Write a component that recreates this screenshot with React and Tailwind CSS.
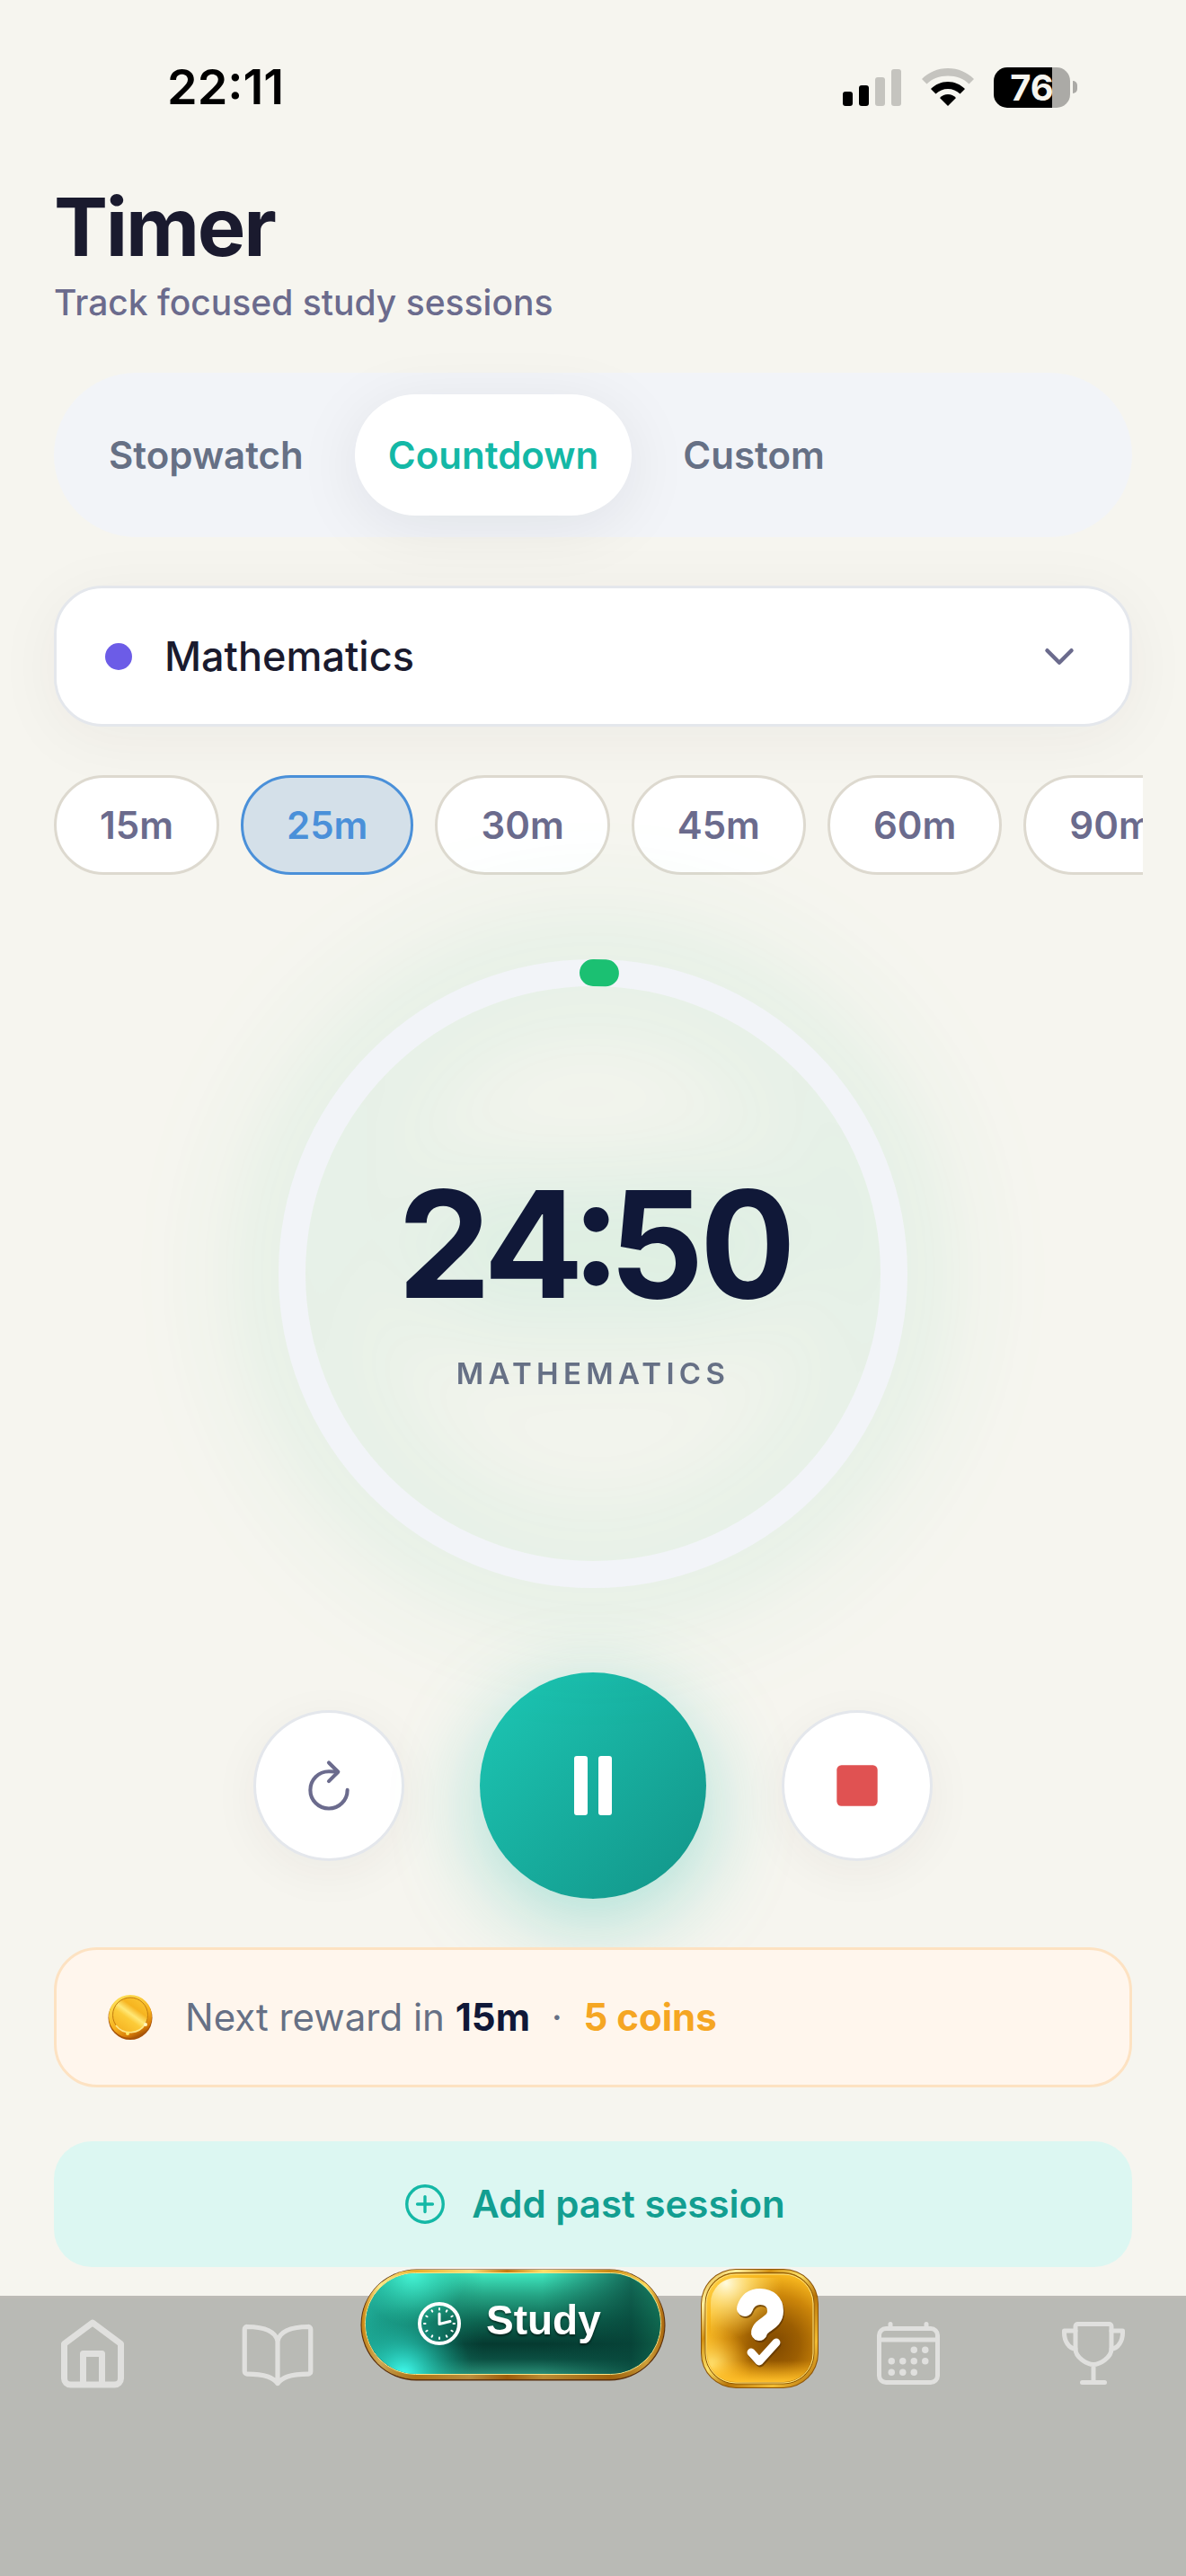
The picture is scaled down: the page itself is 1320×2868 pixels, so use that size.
import { useState } from 'react';
import { IoAddCircleOutline, IoBookOutline, IoCalendarOutline, IoChevronDown, IoPause, IoRefreshOutline, IoStop, IoTrophyOutline } from 'react-icons/io5';

const MODES = ['Stopwatch', 'Countdown', 'Custom'];
const PRESETS = [15, 25, 30, 45, 60, 90];
const RADIUS = 335;
const CIRCUMFERENCE = 2 * Math.PI * RADIUS;

function StatusBar() {
  return (
    <div className="flex items-center justify-between pt-[65px] pr-[121px] pl-[186px]">
      <span className="text-[54px] leading-[64px] font-semibold text-black">22:11</span>
      <div className="flex items-center">
        <svg width="66" height="42" viewBox="0 0 66 42" aria-hidden="true">
          <rect x="0" y="26" width="11" height="16" rx="3" fill="#000" />
          <rect x="18" y="19" width="11" height="23" rx="3" fill="#000" />
          <rect x="36" y="10" width="11" height="32" rx="3" fill="#c5c4bf" />
          <rect x="54" y="1" width="11" height="41" rx="3" fill="#c5c4bf" />
        </svg>
        <svg className="ml-[22px]" width="58" height="42" viewBox="0 0 58 42" aria-hidden="true">
          <path d="M29 0C17.500 0 7.500 4.500 0 12l5.500 5.500C11.500 11.500 19.500 8.500 29 8.500s17.500 3 23.500 9L58 12C50.500 4.500 40.500 0 29 0Z" fill="#c5c4bf" />
          <path d="M29 15c-7.500 0-14 3-19 8l5.500 5.500c3.500-3.500 8.500-5.500 13.500-5.500s10 2 13.500 5.500L48 23c-5-5-11.500-8-19-8Z" fill="#000" />
          <path d="M29 29c-3.500 0-6.500 1.500-9 4l9 9 9-9c-2.500-2.500-5.500-4-9-4Z" fill="#000" />
        </svg>
        <div className="ml-[22px] flex h-[45px] w-[85px] items-center justify-center rounded-[15px] bg-[linear-gradient(90deg,#000_77%,#abaaa6_77%)] text-[40px] leading-[45px] font-bold text-[#f6f5ef]">
          76
        </div>
        <span className="ml-[3px] h-[14px] w-[5px] rounded-r-full bg-[#abaaa6]" />
      </div>
    </div>
  );
}

function HomeIcon() {
  return (
    <svg width="72" height="80" viewBox="0 0 72 80" fill="none" stroke="currentColor" strokeWidth="7" strokeLinejoin="round" aria-hidden="true">
      <path d="M4.500 29.500 36 6l31.500 23.500V68a7 7 0 0 1-7 7h-49a7 7 0 0 1-7-7Z" />
      <path d="M25.500 75V40.500h21V75" />
    </svg>
  );
}

function StudyArt() {
  return (
    <svg className="absolute inset-0 h-full w-full" viewBox="0 0 340 125" aria-hidden="true">
      <defs>
        <linearGradient id="rim" x1="0" y1="0" x2="1" y2="0">
          <stop offset="0" stopColor="#c98410" />
          <stop offset="0.060" stopColor="#ffe98a" />
          <stop offset="0.180" stopColor="#e9ae2a" />
          <stop offset="0.360" stopColor="#ffe27a" />
          <stop offset="0.480" stopColor="#c47a10" />
          <stop offset="0.600" stopColor="#ffe06a" />
          <stop offset="0.820" stopColor="#c98814" />
          <stop offset="0.940" stopColor="#ffd95a" />
          <stop offset="1" stopColor="#a8650c" />
        </linearGradient>
        <linearGradient id="rimShade" x1="0" y1="0" x2="0" y2="1">
          <stop offset="0.500" stopColor="#8a4b05" stopOpacity="0" />
          <stop offset="1" stopColor="#7a3f05" stopOpacity="0.550" />
        </linearGradient>
        <linearGradient id="teal" x1="0" y1="0" x2="0" y2="1">
          <stop offset="0" stopColor="#3fe8c0" />
          <stop offset="0.220" stopColor="#25a585" />
          <stop offset="0.480" stopColor="#0d6450" />
          <stop offset="0.700" stopColor="#053a30" />
          <stop offset="0.850" stopColor="#0b4f42" />
          <stop offset="1" stopColor="#2a8f77" />
        </linearGradient>
        <linearGradient id="tealShade" x1="0" y1="0" x2="1" y2="0">
          <stop offset="0.600" stopColor="#07463a" stopOpacity="0" />
          <stop offset="0.900" stopColor="#07463a" stopOpacity="0.750" />
          <stop offset="1" stopColor="#116a50" stopOpacity="0.750" />
        </linearGradient>
        <linearGradient id="tealLeft" x1="0" y1="0" x2="1" y2="0">
          <stop offset="0" stopColor="#20b09c" stopOpacity="0.900" />
          <stop offset="0.400" stopColor="#12806c" stopOpacity="0" />
        </linearGradient>
        <radialGradient id="cyanGlow" gradientUnits="userSpaceOnUse" cx="48" cy="118" r="76">
          <stop offset="0" stopColor="#42fff2" />
          <stop offset="0.350" stopColor="#2bd6c4" stopOpacity="0.700" />
          <stop offset="1" stopColor="#119c84" stopOpacity="0" />
        </radialGradient>
        <radialGradient id="mintGlow" gradientUnits="userSpaceOnUse" cx="58" cy="4" r="60">
          <stop offset="0" stopColor="#4bffe0" stopOpacity="0.850" />
          <stop offset="1" stopColor="#2fe0bd" stopOpacity="0" />
        </radialGradient>
      </defs>
      <rect x="0.500" y="0.500" width="339" height="124" rx="62" fill="#5b2f0b" />
      <rect x="1.500" y="1" width="337" height="122" rx="61" fill="url(#rim)" />
      <rect x="1.500" y="1" width="337" height="122" rx="61" fill="url(#rimShade)" />
      <rect x="5.500" y="4.500" width="329" height="113" rx="56" fill="url(#teal)" stroke="#ffe585" strokeWidth="1" />
      <rect x="6" y="5" width="328" height="112" rx="56" fill="url(#tealShade)" />
      <rect x="6" y="5" width="328" height="112" rx="56" fill="url(#tealLeft)" />
      <rect x="6" y="5" width="328" height="112" rx="56" fill="url(#mintGlow)" />
      <rect x="6" y="5" width="328" height="112" rx="56" fill="url(#cyanGlow)" />
    </svg>
  );
}

function ClockIcon() {
  return (
    <svg className="relative" width="50" height="50" viewBox="0 0 50 50" fill="none" stroke="#fff" strokeLinecap="round" strokeLinejoin="round" aria-hidden="true">
      <circle cx="25" cy="25" r="22" strokeWidth="4" />
      {Array.from({ length: 12 }, (_, i) => (
        <path key={i} d="M25 8v1.500" strokeWidth="2" transform={`rotate(${i * 30} 25 25)`} />
      ))}
      <path d="M25 14v11.500l12-3" strokeWidth="3" />
    </svg>
  );
}

function QuizArt() {
  return (
    <svg width="131" height="133" viewBox="0 0 131 133" aria-hidden="true">
      <defs>
        <linearGradient id="goldRim" x1="0" y1="0" x2="1" y2="1">
          <stop offset="0" stopColor="#d99a14" />
          <stop offset="0.150" stopColor="#fff2a0" />
          <stop offset="0.300" stopColor="#d08e10" />
          <stop offset="0.450" stopColor="#ffe46a" />
          <stop offset="0.600" stopColor="#b87408" />
          <stop offset="0.800" stopColor="#f3bd32" />
          <stop offset="1" stopColor="#a86406" />
        </linearGradient>
        <radialGradient id="goldFace" gradientUnits="userSpaceOnUse" cx="82" cy="84" r="100">
          <stop offset="0" stopColor="#804900" />
          <stop offset="0.280" stopColor="#9c5e02" />
          <stop offset="0.550" stopColor="#cc860a" />
          <stop offset="0.780" stopColor="#f8b81f" />
          <stop offset="1" stopColor="#ffd24a" />
        </radialGradient>
        <radialGradient id="goldCorner" gradientUnits="userSpaceOnUse" cx="12" cy="108" r="44">
          <stop offset="0" stopColor="#ffe57a" />
          <stop offset="1" stopColor="#ffb71c" stopOpacity="0" />
        </radialGradient>
        <radialGradient id="goldShine" gradientUnits="userSpaceOnUse" cx="28" cy="16" r="62">
          <stop offset="0" stopColor="#fffbe0" />
          <stop offset="0.400" stopColor="#ffe68a" stopOpacity="0.700" />
          <stop offset="1" stopColor="#ffd24a" stopOpacity="0" />
        </radialGradient>
        <linearGradient id="goldBase" x1="0" y1="0" x2="0" y2="1">
          <stop offset="0.800" stopColor="#ffb61a" stopOpacity="0" />
          <stop offset="1" stopColor="#ffc02a" />
        </linearGradient>
      </defs>
      <rect width="131" height="133" rx="39" fill="#8d5407" />
      <rect x="1" y="1" width="129" height="131" rx="38" fill="url(#goldRim)" />
      <rect x="5" y="4.500" width="121" height="123.500" rx="34" fill="#c98a10" stroke="#8a5606" strokeWidth="1" />
      <rect x="6" y="6" width="119" height="121" rx="33" fill="url(#goldFace)" stroke="#ffe680" strokeWidth="1" />
      <rect x="7" y="7" width="117" height="119" rx="32" fill="url(#goldCorner)" />
      <rect x="7" y="7" width="117" height="119" rx="32" fill="url(#goldBase)" />
      <rect x="11" y="10" width="109" height="114" rx="28" fill="url(#goldShine)" />
      <g fill="none" strokeLinecap="round" strokeLinejoin="round">
        <g stroke="#5f3600" opacity="0.750" transform="translate(1 2)">
          <path d="M49 44C52 35 58 31 66 31c10 0 17 6 17 16 0 14-16 14-18 24" strokeWidth="18" />
          <path d="M56 93l9 10 19-21" strokeWidth="9" />
        </g>
        <g stroke="#fff">
          <path d="M49 44C52 35 58 31 66 31c10 0 17 6 17 16 0 14-16 14-18 24" strokeWidth="18" />
          <path d="M56 93l9 10 19-21" strokeWidth="9" />
        </g>
      </g>
    </svg>
  );
}

function Coin() {
  return (
    <svg width="50" height="50" viewBox="0 0 50 50" aria-hidden="true">
      <defs>
        <linearGradient id="coinEdge" x1="0.200" y1="0" x2="0.700" y2="1">
          <stop offset="0" stopColor="#ffe45c" />
          <stop offset="0.600" stopColor="#f6b01c" />
          <stop offset="0.850" stopColor="#d97d08" />
          <stop offset="1" stopColor="#9a4a04" />
        </linearGradient>
        <linearGradient id="coinFace" x1="0.850" y1="0.050" x2="0.200" y2="0.950">
          <stop offset="0" stopColor="#fbc530" />
          <stop offset="0.300" stopColor="#f6b420" />
          <stop offset="0.480" stopColor="#ffe877" />
          <stop offset="0.620" stopColor="#fccb38" />
          <stop offset="1" stopColor="#f5b322" />
        </linearGradient>
      </defs>
      <circle cx="25" cy="25.500" r="24.500" fill="#a8540a" />
      <circle cx="25" cy="24" r="24" fill="url(#coinEdge)" />
      <circle cx="25" cy="22.500" r="19.500" fill="url(#coinFace)" stroke="#c27c0e" strokeWidth="1" />
      <path d="M9 34a20 20 0 0 0 33-2" fill="none" stroke="#ffe88a" strokeWidth="1.500" />
      <circle cx="42" cy="33" r="2" fill="#fff6bd" />
      <circle cx="22" cy="43" r="2" fill="#ffe96a" />
    </svg>
  );
}

export default function App() {
  const [mode, setMode] = useState('Countdown');
  const [minutes, setMinutes] = useState(25);
  const elapsed = 10;
  const progress = (elapsed / (25 * 60)) * CIRCUMFERENCE;

  return (
    <div className="flex min-h-screen flex-col overflow-x-hidden bg-[#f6f5ef] font-['Inter',sans-serif]">
      <StatusBar />

      <main className="flex flex-col px-[60px] pt-[70px] pb-8">
        <header>
          <h1 className="text-[90px] leading-[108px] font-bold tracking-tight text-[#1a1a2e]">Timer</h1>
          <p className="mt-[6px] text-[39px] leading-[48px] font-medium text-[#6b6b8d]">Track focused study sessions</p>
        </header>

        <div role="tablist" className="mt-[54px] flex gap-5 rounded-full bg-[#f2f4f8] p-6">
          {MODES.map((item) => (
            <button
              key={item}
              type="button"
              role="tab"
              aria-selected={mode === item}
              onClick={() => setMode(item)}
              className={`rounded-full px-[37px] py-[42px] text-[42px] leading-[51px] font-semibold ${
                mode === item ? 'bg-white text-[#14b8a6] shadow-[0_12px_72px_rgba(15,23,42,0.08)]' : 'text-[#667085]'
              }`}
            >
              {item}
            </button>
          ))}
        </div>

        <label className="mt-[54px] flex items-center rounded-[54px] border-[3px] border-[#e4e7ec] bg-white px-[54px] py-12 shadow-[0_12px_72px_rgba(60,40,30,0.05)]">
          <span className="h-[30px] w-[30px] rounded-full bg-[#6c5ce7]" />
          <select aria-label="Subject" defaultValue="Mathematics" className="ml-9 h-[55px] flex-1 appearance-none bg-transparent text-[45px] leading-[55px] font-medium text-[#1a1a2e] outline-none">
            <option>Mathematics</option>
          </select>
          <IoChevronDown className="text-[#6b6b8d]" size={48} />
        </label>

        <div className="-mr-3 mt-[54px] flex gap-6 overflow-hidden">
          {PRESETS.map((item) => (
            <button
              key={item}
              type="button"
              onClick={() => setMinutes(item)}
              className={`shrink-0 rounded-full border-[3px] px-12 py-[27px] text-[42px] leading-[51px] font-semibold ${
                minutes === item ? 'border-[#4a90d9] bg-[#d4e0e9] text-[#4a90d9]' : 'border-[#ddd9cf] bg-white text-[#6b6b8d]'
              }`}
            >
              {item}m
            </button>
          ))}
        </div>

        <section className="mt-[94px] grid place-items-center drop-shadow-[0_0_72px_rgba(27,192,130,0.36)]">
          <svg className="col-start-1 row-start-1" width="700" height="700" viewBox="0 0 700 700" fill="none" strokeWidth="30" aria-hidden="true">
            <circle cx="350" cy="350" r={RADIUS} stroke="#f2f4f8" />
            <circle
              cx="350"
              cy="350"
              r={RADIUS}
              stroke="#1bc072"
              strokeLinecap="round"
              strokeDasharray={`${progress} ${CIRCUMFERENCE}`}
              transform="rotate(-90 350 350)"
            />
          </svg>
          <div className="col-start-1 row-start-1 flex flex-col items-center">
            <p className="text-[165px] leading-[198px] font-bold tracking-[-0.04em] text-[#101838] tabular-nums [font-feature-settings:'case','calt']">24:50</p>
            <p className="mt-6 text-[33px] leading-[42px] font-semibold tracking-[0.16em] text-[#667085]">MATHEMATICS</p>
          </div>
        </section>

        <div className="mt-[94px] flex items-center justify-center gap-[84px]">
          <button type="button" aria-label="Reset" className="flex h-[168px] w-[168px] items-center justify-center rounded-full border-[3px] border-[#e4e7ec] bg-white text-[#6b6b8d] shadow-[0_12px_54px_rgba(60,40,30,0.05)]">
            <IoRefreshOutline size={66} />
          </button>
          <button type="button" aria-label="Pause" className="flex h-[252px] w-[252px] items-center justify-center rounded-full bg-linear-to-br from-[#1dc8b5] to-[#129488] text-white shadow-[0_24px_96px_rgba(20,184,166,0.35)]">
            <IoPause size={96} />
          </button>
          <button type="button" aria-label="Stop" className="flex h-[168px] w-[168px] items-center justify-center rounded-full border-[3px] border-[#e4e7ec] bg-white text-[#e05252] shadow-[0_12px_54px_rgba(60,40,30,0.05)]">
            <IoStop size={66} />
          </button>
        </div>

        <div className="relative mt-[54px] flex items-center gap-9 rounded-[48px] border-[3px] border-[#fde2c2] bg-[#fff6ed] px-[57px] py-12">
          <Coin />
          <p className="text-[42px] leading-[54px] whitespace-pre text-[#667085]">
            Next reward in <b className="font-bold text-[#101838]">15m</b>
            {'  ·  '}
            <b className="font-bold text-[#f5a623]">5 coins</b>
          </p>
        </div>

        <button type="button" className="mt-[60px] flex items-center justify-center gap-[25px] rounded-[42px] bg-[#dcf7f2] py-[43px] text-[42px] leading-[54px] font-semibold text-[#129e91]">
          <IoAddCircleOutline className="text-[#14b8a6]" size={54} />
          Add past session
        </button>
      </main>

      <nav className="grid flex-1 grid-cols-[5fr_5fr_minmax(0,12fr)_5fr_5fr] items-start justify-items-center border-t-[3px] border-[#bdbbb6] bg-[#b9bab5] pt-[21px] pb-[180px] text-[#e0e0de]">
        <a href="#home" aria-label="Home">
          <HomeIcon />
        </a>
        <a href="#library" aria-label="Library">
          <IoBookOutline size={84} />
        </a>
        <div className="relative -mt-[54px] flex items-start gap-[39px] pr-2">
          <a href="#study" className="relative flex h-[125px] w-[340px] items-center gap-[27px] pb-1 pl-[63px] font-['Liberation_Sans',Arial,sans-serif] text-[46px] leading-[54px] font-bold text-white">
            <StudyArt />
            <ClockIcon />
            <span className="relative pb-2 drop-shadow-[0_2px_1px_rgba(0,0,0,0.5)]">Study</span>
          </a>
          <a href="#quiz" aria-label="Quiz">
            <QuizArt />
          </a>
        </div>
        <a href="#calendar" aria-label="Calendar">
          <IoCalendarOutline size={80} />
        </a>
        <a href="#awards" aria-label="Awards">
          <IoTrophyOutline size={80} />
        </a>
      </nav>
    </div>
  );
}
